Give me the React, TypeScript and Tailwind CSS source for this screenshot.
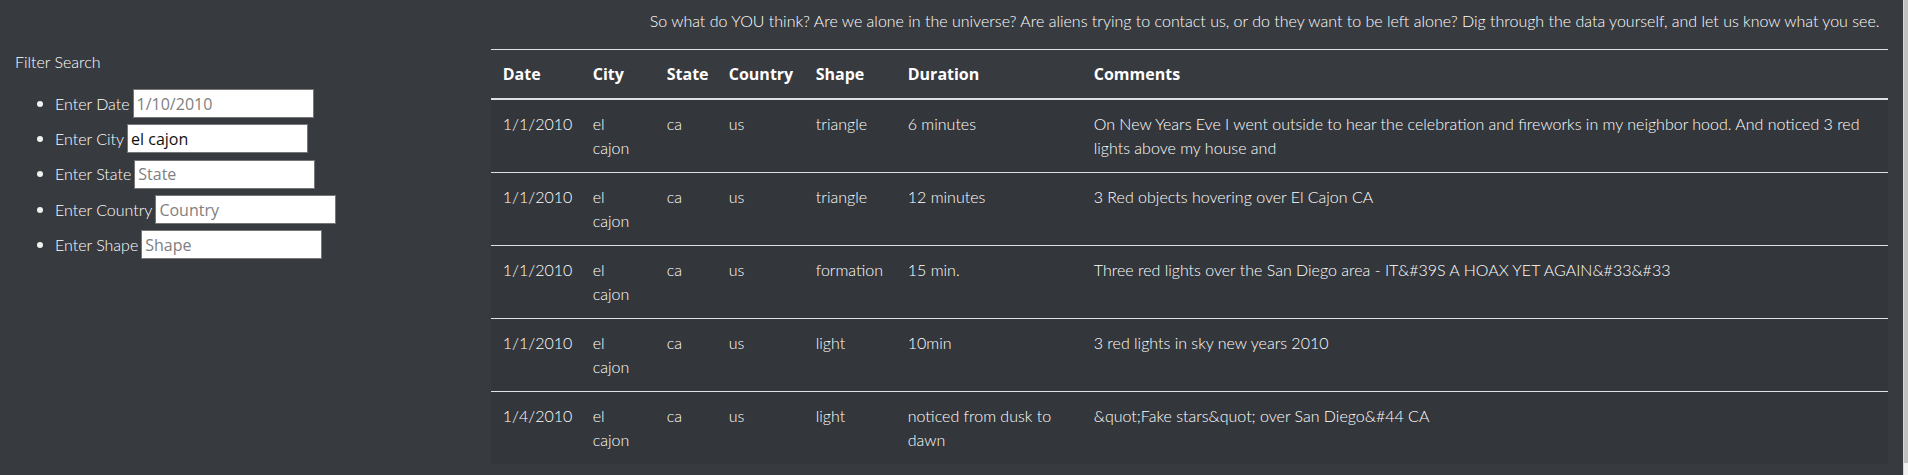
import React from 'react';

type Sighting = {
  datetime: string;
  city: string;
  state: string;
  country: string;
  shape: string;
  duration: string;
  comments: string;
};

const sightings: Sighting[] = [
  {
    datetime: '1/1/2010',
    city: 'el cajon',
    state: 'ca',
    country: 'us',
    shape: 'triangle',
    duration: '6 minutes',
    comments:
      'On New Years Eve I went outside to hear the celebration and fireworks in my neighbor hood. And noticed 3 red lights above my house and',
  },
  {
    datetime: '1/1/2010',
    city: 'el cajon',
    state: 'ca',
    country: 'us',
    shape: 'triangle',
    duration: '12 minutes',
    comments: '3 Red objects hovering over El Cajon CA',
  },
  {
    datetime: '1/1/2010',
    city: 'el cajon',
    state: 'ca',
    country: 'us',
    shape: 'formation',
    duration: '15 min.',
    comments: 'Three red lights over the San Diego area - IT&#39S A HOAX YET AGAIN&#33&#33',
  },
  {
    datetime: '1/1/2010',
    city: 'el cajon',
    state: 'ca',
    country: 'us',
    shape: 'light',
    duration: '10min',
    comments: '3 red lights in sky new years 2010',
  },
  {
    datetime: '1/4/2010',
    city: 'el cajon',
    state: 'ca',
    country: 'us',
    shape: 'light',
    duration: 'noticed from dusk to dawn',
    comments: '&quot;Fake stars&quot; over San Diego&#44 CA',
  },
];

const filters = [
  { label: 'Enter Date', placeholder: '1/10/2010', value: '' },
  { label: 'Enter City', placeholder: 'City', value: 'el cajon' },
  { label: 'Enter State', placeholder: 'State', value: '' },
  { label: 'Enter Country', placeholder: 'Country', value: '' },
  { label: 'Enter Shape', placeholder: 'Shape', value: '' },
];

const headers = [
  { title: 'Date', width: 'w-[90px]' },
  { title: 'City', width: 'w-[74px]' },
  { title: 'State', width: 'w-[62px]' },
  { title: 'Country', width: 'w-[87px]' },
  { title: 'Shape', width: 'w-[92px]' },
  { title: 'Duration', width: 'w-[186px]' },
  { title: 'Comments', width: '' },
];

const App: React.FC = () => {
  return (
    <div className="flex h-screen overflow-hidden bg-[#373a3f] text-white font-['Lato','Liberation_Sans',sans-serif] font-light text-[16px] leading-[24px]">
      <div className="flex w-[1903px]">
        {/* Filter column */}
        <div className="w-3/12 px-[15px] pt-[50px]">
          <p>Filter Search</p>
          <ul className="mt-[12px]">
            {filters.map((f) => (
              <li key={f.label} className="flex items-center h-[35.3px]">
                <span className="ml-[22px] mr-[12px] w-[6px] h-[6px] rounded-full bg-[#f2f2f2]" />
                <label className="whitespace-nowrap">{f.label}</label>
                <input
                  type="text"
                  defaultValue={f.value}
                  placeholder={f.placeholder}
                  className="ml-[3px] w-[181px] h-[29px] bg-white border border-[#767676] px-[3px] text-[#111] font-['Open_Sans',sans-serif] font-normal text-[16px] placeholder:text-[#808080] outline-none"
                />
              </li>
            ))}
          </ul>
        </div>

        {/* Data column */}
        <div className="w-9/12 px-[15px] pt-[9px]">
          <p className="pl-[159px] mb-[16px] whitespace-nowrap">
            So what do YOU think? Are we alone in the universe? Are aliens trying to contact us, or do they want to be
            left alone? Dig through the data yourself, and let us know what you see.
          </p>
          <table className="w-full table-fixed border-collapse">
            <thead>
              <tr>
                {headers.map((h) => (
                  <th
                    key={h.title}
                    className={`${h.width} p-[12px] text-left align-bottom border-t border-b-2 border-[#dee2e6] font-['Open_Sans',sans-serif] font-bold`}
                  >
                    {h.title}
                  </th>
                ))}
              </tr>
            </thead>
            <tbody className="bg-[#33363b]">
              {sightings.map((s, i) => (
                <tr key={i} className="align-top">
                  <td className="p-[12px] border-t border-[#dee2e6]">{s.datetime}</td>
                  <td className="py-[12px] pl-[12px] pr-[16px] border-t border-[#dee2e6]">{s.city}</td>
                  <td className="p-[12px] border-t border-[#dee2e6]">{s.state}</td>
                  <td className="p-[12px] border-t border-[#dee2e6]">{s.country}</td>
                  <td className="p-[12px] border-t border-[#dee2e6]">{s.shape}</td>
                  <td className="p-[12px] border-t border-[#dee2e6]">{s.duration}</td>
                  <td className="p-[12px] border-t border-[#dee2e6]">{s.comments}</td>
                </tr>
              ))}
            </tbody>
          </table>
        </div>
      </div>

      {/* scrollbar */}
      <div className="w-[5px] bg-[#f1f1f1] border-l border-[#d6d6d6]">
        <div className="h-[463px] bg-[#c1c1c1]" />
      </div>
    </div>
  );
};

export default App;
